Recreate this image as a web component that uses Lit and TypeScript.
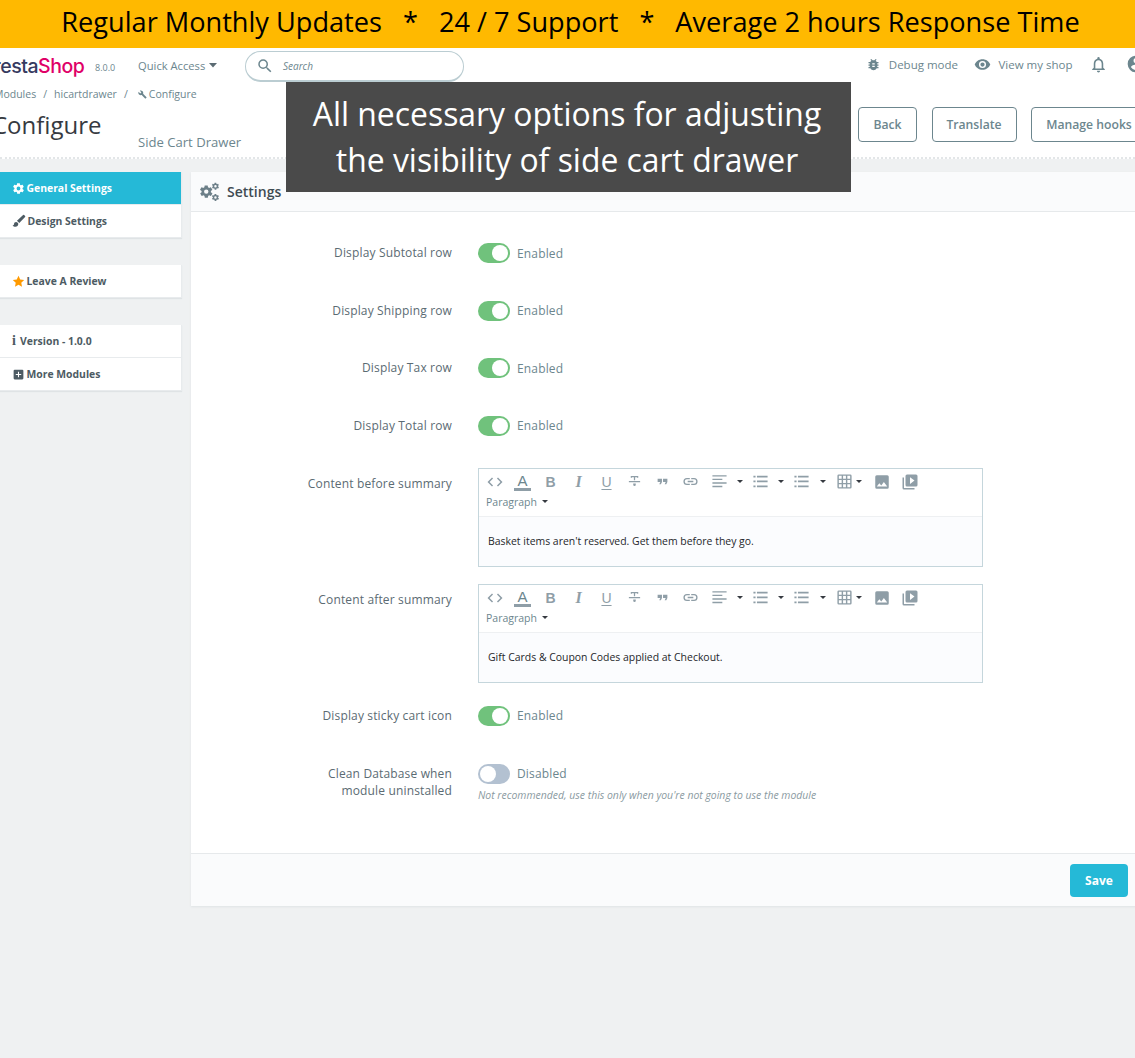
import { LitElement, html, css } from 'lit';
import { customElement } from 'lit/decorators.js';

const icon = (d: string, size = 14, color = 'currentColor', box = 24) => html`<svg
  width=${size}
  height=${size}
  viewBox="0 0 ${box} ${box}"
  fill=${color}
><path d=${d}></path></svg>`;

// material style icon paths
const GEAR =
  'M19.4 13c0-.3.1-.6.1-1s0-.7-.1-1l2.1-1.6c.2-.2.2-.4.1-.6l-2-3.5c-.1-.2-.4-.3-.6-.2l-2.5 1c-.5-.4-1.1-.7-1.7-1l-.4-2.6c0-.3-.2-.4-.5-.4h-4c-.3 0-.5.1-.5.4l-.4 2.6c-.6.3-1.2.6-1.7 1l-2.5-1c-.2-.1-.5 0-.6.2l-2 3.5c-.1.2-.1.4.1.6L4.6 11c0 .3-.1.7-.1 1s0 .7.1 1l-2.1 1.6c-.2.2-.2.4-.1.6l2 3.5c.1.2.4.3.6.2l2.5-1c.5.4 1.1.7 1.7 1l.4 2.6c0 .3.2.4.5.4h4c.3 0 .5-.1.5-.4l.4-2.6c.6-.3 1.2-.6 1.7-1l2.5 1c.2.1.5 0 .6-.2l2-3.5c.1-.2.1-.4-.1-.6L19.4 13zM12 15.5a3.5 3.5 0 1 1 0-7 3.5 3.5 0 0 1 0 7z';
const BRUSH =
  'M7 13.500c-2 0-3.500 1.500-3.500 3.500 0 1.400-1 2.200-2.500 2.500C2 21 4 22 6 22c2.600 0 4.800-2 4.800-4.700 0-2.100-1.700-3.800-3.800-3.800zM22.400 3.300l-1.700-1.700a1.200 1.200 0 0 0-1.700 0L8.500 11.500l4 4 9.900-10.500a1.200 1.200 0 0 0 0-1.700z';
const STAR = 'M12 1.5l3.2 6.9 7.3.9-5.4 5.1 1.4 7.4L12 18.2l-6.5 3.6 1.4-7.4L1.5 9.3l7.3-.9z';
const PLUS_BOX =
  'M19 3H5a2 2 0 0 0-2 2v14a2 2 0 0 0 2 2h14a2 2 0 0 0 2-2V5a2 2 0 0 0-2-2zm-2 10h-4v4h-2v-4H7v-2h4V7h2v4h4v2z';
const BUG =
  'M20 8h-2.8c-.5-.8-1.1-1.5-1.8-2L17 4.4 15.6 3l-2.2 2.2a6 6 0 0 0-2.8 0L8.4 3 7 4.4 8.6 6c-.7.5-1.3 1.2-1.8 2H4v2h2.1c-.1.3-.1.7-.1 1v1H4v2h2v1c0 .3 0 .7.1 1H4v2h2.8a6 6 0 0 0 10.4 0H20v-2h-2.1c.1-.3.1-.7.1-1v-1h2v-2h-2v-1c0-.3 0-.7-.1-1H20V8zm-6 8h-4v-2h4v2zm0-4h-4v-2h4v2z';
const EYE =
  'M12 4.5C7 4.5 2.7 7.6 1 12c1.7 4.4 6 7.5 11 7.5s9.3-3.1 11-7.5c-1.7-4.4-6-7.5-11-7.5zM12 17a5 5 0 1 1 0-10 5 5 0 0 1 0 10zm0-8a3 3 0 1 0 0 6 3 3 0 0 0 0-6z';
const BELL =
  'M12 22a2 2 0 0 0 2-2h-4a2 2 0 0 0 2 2zm6-6v-5c0-3.1-1.6-5.6-4.5-6.3V4a1.5 1.5 0 0 0-3 0v.7C7.6 5.4 6 7.9 6 11v5l-2 2v1h16v-1l-2-2zm-2 1H8v-6c0-2.5 1.5-4.5 4-4.5s4 2 4 4.5v6z';
const USER =
  'M12 2a10 10 0 1 0 0 20 10 10 0 0 0 0-20zm0 3a3 3 0 1 1 0 6 3 3 0 0 1 0-6zm0 14.2a7.2 7.2 0 0 1-6-3.2c0-2 4-3.1 6-3.1s6 1.1 6 3.1a7.2 7.2 0 0 1-6 3.2z';
const SEARCH =
  'M15.5 14h-.79l-.28-.27A6.471 6.471 0 0 0 16 9.5 6.5 6.5 0 1 0 9.5 16c1.61 0 3.09-.59 4.23-1.57l.27.28v.79l5 4.99L20.49 19l-4.99-5zm-6 0C7.01 14 5 11.99 5 9.5S7.01 5 9.5 5 14 7.01 14 9.5 11.99 14 9.5 14z';
const WRENCH =
  'M22.700 19l-9.100-9.100c.9-2.300.4-5-1.500-6.900C10.100 1 7.100.6 4.700 1.700L9 6 6 9 1.600 4.700C.4 7.100.9 10.100 2.900 12.100c1.900 1.900 4.600 2.400 6.900 1.500l9.100 9.100c.4.4 1 .4 1.400 0l2.300-2.300c.5-.4.5-1.100.1-1.400z';
const CODE = 'M9.400 16.600 4.800 12l4.600-4.600L8 6l-6 6 6 6 1.400-1.400zm5.200 0 4.600-4.600-4.600-4.600L16 6l6 6-6 6-1.400-1.400z';
const STRIKE = 'M3 11h18v2H3zM6 3h12v3h-2V5H13v5h-2V5H8v1H6zM10 17a2 2 0 1 0 4 0v-2h-4z';
const QUOTE = 'M3 7h8v6l-2 4H6l2-4H3zm10 0h8v6l-2 4h-3l2-4h-5z';
const LINK =
  'M3.900 12A3.100 3.100 0 0 1 7 8.900h4V7H7a5 5 0 0 0 0 10h4v-1.900H7A3.100 3.100 0 0 1 3.900 12zM8 13h8v-2H8v2zm9-6h-4v1.900h4a3.100 3.100 0 0 1 0 6.200h-4V17h4a5 5 0 0 0 0-10z';
const ALIGN = 'M2 3h20v2H2zM2 8h14v2H2zM2 13h20v2H2zM2 18h14v2H2z';
const BULLETS = 'M7 4h15v2.500H7zM7 10.700h15v2.500H7zM7 17.500h15V20H7zM2 4h3v2.500H2zM2 10.700h3v2.500H2zM2 17.500h3V20H2z';
const TABLE =
  'M20 2H4a2 2 0 0 0-2 2v16a2 2 0 0 0 2 2h16a2 2 0 0 0 2-2V4a2 2 0 0 0-2-2zM8 20H4v-4h4v4zm0-6H4v-4h4v4zm0-6H4V4h4v4zm6 12h-4v-4h4v4zm0-6h-4v-4h4v4zm0-6h-4V4h4v4zm6 12h-4v-4h4v4zm0-6h-4v-4h4v4zm0-6h-4V4h4v4z';
const IMAGE = 'M21 19V5a2 2 0 0 0-2-2H5a2 2 0 0 0-2 2v14a2 2 0 0 0 2 2h14a2 2 0 0 0 2-2zM8.500 13.500l2.500 3 3.500-4.500 4.500 6H5l3.500-4.500z';
const VIDEO =
  'M4 6H2v14a2 2 0 0 0 2 2h14v-2H4V6zm16-4H8a2 2 0 0 0-2 2v12a2 2 0 0 0 2 2h12a2 2 0 0 0 2-2V4a2 2 0 0 0-2-2zm-8 12.500v-9l6 4.500-6 4.500z';

const caret = html`<i class="caret"></i>`;

const caretDark = html`<svg width="8" height="5" viewBox="0 0 8 5"><path d="M0 0h8L4 4.500z" fill="#5b6b73"></path></svg>`;

const cogs = html`<svg width="20" height="20" viewBox="0 0 24 24" fill="#6c7f88">
  <g transform="translate(-1.500 2.500) scale(.75)"><path d=${GEAR}></path></g>
  <g transform="translate(13.500 0) scale(.42)"><path d=${GEAR}></path></g>
  <g transform="translate(13.500 13.500) scale(.42)"><path d=${GEAR}></path></g>
</svg>`;

@customElement('rich-editor')
export class RichEditor extends LitElement {
  static properties = { content: {} };
  declare content: string;

  static styles = css`
    :host {
      display: block;
      width: 505px;
      height: 99px;
      box-sizing: border-box;
      border: 1px solid #c5d6dc;
      background: #fbfcfe;
      font-family: 'Open Sans', sans-serif;
    }
    .toolbar {
      height: 48px;
      box-sizing: border-box;
      background: #fff;
      border-bottom: 1px solid #eef0f2;
      padding: 3px 0 0 1.500px;
      color: #8f9ea7;
    }
    .tools {
      display: flex;
      align-items: center;
      height: 20px;
    }
    .tool {
      width: 28px;
      height: 20px;
      flex: none;
      display: flex;
      align-items: center;
      justify-content: center;
      font: 700 14px 'Liberation Sans', sans-serif;
    }
    .tool.i {
      font: italic 700 16px 'Liberation Serif', serif;
    }
    .tool.u {
      font-weight: 400;
      text-decoration: underline;
      text-underline-offset: 2px;
    }
    .tool.a span {
      font-weight: 400;
      font-size: 15px;
      line-height: 15px;
      padding: 0 3px;
      color: #6c868e;
      border-bottom: 3px solid #8f9ea7;
    }
    .drop {
      display: flex;
      align-items: center;
      flex: none;
      gap: 9.400px;
      margin-right: 9px;
    }
    .drop.first {
      margin-left: 6px;
    }
    .drop.last {
      margin-right: 10.400px;
    }
    .drop.table {
      gap: 3.400px;
      margin-right: 5.500px;
    }
    .caret {
      display: inline-block;
      width: 0;
      height: 0;
      border-left: 3px solid transparent;
      border-right: 3px solid transparent;
      border-top: 3.500px solid #363a41;
    }
    .format {
      display: flex;
      align-items: center;
      gap: 5px;
      margin: 3px 0 0 5.500px;
      font-size: 10.500px;
      color: #6c868e;
    }
    .body {
      padding: 17px 0 0 9px;
      font-size: 10.450px;
      line-height: 14px;
      color: #25272b;
    }
  `;

  render() {
    return html`
      <div class="toolbar">
        <div class="tools">
          <span class="tool">${icon(CODE, 18)}</span>
          <span class="tool a"><span>A</span></span>
          <span class="tool">B</span>
          <span class="tool i">I</span>
          <span class="tool u">U</span>
          <span class="tool">${icon(STRIKE, 15)}</span>
          <span class="tool">${icon(QUOTE, 13)}</span>
          <span class="tool">${icon(LINK, 17)}</span>
          <span class="drop first">${icon(ALIGN, 17)}${caret}</span>
          <span class="drop">${icon(BULLETS, 17)}${caret}</span>
          <span class="drop last">${icon(BULLETS, 17)}${caret}</span>
          <span class="drop table">${icon(TABLE, 17)}${caret}</span>
          <span class="tool">${icon(IMAGE, 18)}</span>
          <span class="tool">${icon(VIDEO, 18)}</span>
        </div>
        <div class="format">Paragraph ${caret}</div>
      </div>
      <div class="body">${this.content}</div>
    `;
  }
}

@customElement('app-root')
export class AppRoot extends LitElement {
  static styles = css`
    :host {
      display: block;
      position: relative;
      width: 1135px;
      height: 1058px;
      overflow: hidden;
      background: #eff1f2;
      font-family: 'Open Sans', sans-serif;
      color: #6c868e;
    }

    .banner {
      height: 48px;
      box-sizing: border-box;
      padding: 0 0 5px 6px;
      background: #ffb900;
      color: #000;
      display: flex;
      align-items: center;
      justify-content: center;
      gap: 21px;
      font-size: 27.150px;
      white-space: pre;
    }

    .header {
      height: 111px;
      box-sizing: border-box;
      background: #fff;
      border-bottom: 2px dotted #e3e6e8;
      display: flex;
      flex-direction: column;
    }

    .topbar {
      display: flex;
      align-items: center;
      height: 36px;
      font-size: 11.200px;
      white-space: nowrap;
    }
    .logo {
      margin-left: -18.400px;
      width: 113.400px;
      font: 500 19.500px 'Inter', sans-serif;
      letter-spacing: -0.5px;
      color: #363a5f;
      flex: none;
    }
    .logo b {
      font-weight: 500;
      color: #df0067;
    }
    .version {
      width: 43px;
      flex: none;
      font-size: 9px;
      margin-top: 3px;
    }
    .quick {
      width: 107px;
      flex: none;
      display: flex;
      align-items: center;
      gap: 4px;
      margin-bottom: 2px;
    }
    .search {
      width: 219px;
      height: 31px;
      flex: none;
      box-sizing: border-box;
      margin-top: 1px;
      border: 1px solid #bbcdd2;
      border-bottom-width: 2px;
      border-radius: 16px;
      display: flex;
      align-items: center;
      gap: 9px;
      padding-left: 10px;
      font-style: italic;
      font-size: 10px;
      color: #6c868e;
    }
    .actions {
      margin-left: auto;
      margin-right: -10.500px;
      margin-bottom: 4px;
      display: flex;
      align-items: center;
      font-size: 11.500px;
      color: #6c868e;
    }
    .action {
      display: flex;
      align-items: center;
      gap: 7.500px;
      margin-right: 16px;
    }
    .action.tight {
      margin-right: 18px;
    }

    .head {
      display: flex;
      flex: 1;
    }
    .titles {
      flex: 1;
      min-width: 0;
    }
    .crumbs {
      margin: 3px 0 0 -6px;
      display: flex;
      align-items: center;
      gap: 7px;
      font-size: 10.500px;
      height: 14px;
      white-space: nowrap;
    }
    .crumb-link {
      display: flex;
      align-items: center;
      gap: 2px;
      margin-left: 3px;
    }
    .title-row {
      display: flex;
      align-items: flex-end;
      margin-top: 8px;
    }
    .title-row h1 {
      margin: 0 0 0 -8px;
      width: 146px;
      font-size: 24px;
      font-weight: 400;
      line-height: 32px;
      color: #363a41;
      flex: none;
    }
    .title-row span {
      font-size: 13.100px;
      line-height: 16px;
      margin-bottom: -9px;
      color: #6c868e;
    }
    .buttons {
      display: flex;
      gap: 14.500px;
      margin: 23px -12px 0 0;
      flex: none;
    }
    .btn {
      height: 35px;
      box-sizing: border-box;
      display: flex;
      align-items: center;
      justify-content: center;
      border: 1px solid #6c868e;
      border-radius: 4px;
      font-size: 12.200px;
      font-weight: 600;
      background: #fff;
      color: #6c868e;
      white-space: nowrap;
    }

    .tip {
      position: absolute;
      left: 286px;
      top: 82px;
      width: 565px;
      height: 110px;
      background: #4a4a4a;
      color: #fff;
      font-size: 31.900px;
      line-height: 46px;
      text-align: center;
      padding: 9px 3px 0 0;
      box-sizing: border-box;
    }

    .main {
      display: grid;
      grid-template-columns: 182px 1fr;
      gap: 9px;
      margin-top: 13px;
      margin-right: -20px;
    }

    .side {
      display: flex;
      flex-direction: column;
      gap: 27px;
    }
    .group {
      background: #fff;
      box-shadow: 0 1px 1px #dfe3e5;
      border: 1px solid #e8ebed;
      border-width: 0 1px 1px 0;
    }
    .item {
      height: 32px;
      display: flex;
      align-items: center;
      gap: 1.500px;
      padding-left: 12px;
      font-size: 10.400px;
      font-weight: 700;
      color: #4d5b63;
      white-space: nowrap;
    }
    .item + .item {
      border-top: 1px solid #e8ebed;
    }
    .item.active {
      background: #25b9d7;
      color: #fff;
    }
    .info {
      width: 5px;
      margin-right: 1.500px;
      font: 700 14px 'Liberation Serif', serif;
    }

    .panel {
      background: #fff;
      height: 734px;
      box-shadow: 0 1px 2px #dfe3e5;
      display: flex;
      flex-direction: column;
    }
    .panel-head {
      height: 40px;
      box-sizing: border-box;
      background: #fafbfc;
      border-bottom: 1px solid #e6e9eb;
      display: flex;
      align-items: center;
      gap: 7px;
      padding-left: 9px;
      font-size: 14px;
      font-weight: 600;
      color: #3f4b52;
    }
    .form {
      flex: 1;
      padding-top: 31px;
    }
    .row {
      display: grid;
      grid-template-columns: 261px 1fr;
      column-gap: 26px;
      font-size: 12px;
    }
    .row + .row {
      margin-top: 37.670px;
    }
    .row.near {
      margin-top: 17px;
    }
    .row.before-editor {
      margin-top: 32px;
    }
    .row.after-editor {
      margin-top: 23px;
    }
    .row label {
      text-align: right;
      line-height: 17px;
      color: #5b6b73;
      letter-spacing: 0.15px;
      padding-top: 1px;
    }
    .row.plain label {
      line-height: 20px;
      padding-top: 0;
    }
    .row.editor label {
      padding-top: 7px;
    }
    .switch {
      display: flex;
      align-items: center;
      gap: 7px;
      height: 20px;
      letter-spacing: 0.15px;
    }
    .track {
      position: relative;
      display: block;
      width: 32px;
      height: 20px;
      border-radius: 10px;
      background: #70c27c;
    }
    .track::after {
      content: '';
      position: absolute;
      top: 2px;
      right: 2px;
      width: 16px;
      height: 16px;
      border-radius: 50%;
      background: #fff;
    }
    .track.off {
      background: #b3c1d1;
    }
    .track.off::after {
      right: auto;
      left: 2px;
    }
    .help {
      margin-top: 4px;
      font-size: 10.450px;
      font-style: italic;
      color: #8a9aa1;
    }
    .panel-foot {
      height: 52px;
      background: #fafbfc;
      border-top: 1px solid #e6e9eb;
      display: flex;
      align-items: center;
      padding-left: 879px;
    }
    .save {
      width: 58px;
      height: 33px;
      border-radius: 4px;
      background: #25b9d7;
      color: #fff;
      font-size: 12px;
      font-weight: 700;
      display: flex;
      align-items: center;
      justify-content: center;
    }
  `;

  private renderSwitch(label: string) {
    return html`<div class="row plain">
      <label>${label}</label>
      <div class="switch"><span class="track"></span>Enabled</div>
    </div>`;
  }

  render() {
    return html`
      <div class="banner">
        <span>Regular Monthly Updates</span><span>*</span><span>24 / 7 Support</span><span>*</span
        ><span>Average 2 hours Response Time</span>
      </div>

      <div class="header">
        <div class="topbar">
          <div class="logo">Presta<b>Shop</b></div>
          <div class="version">8.0.0</div>
          <div class="quick">Quick Access ${caretDark}</div>
          <div class="search">${icon(SEARCH, 18)}Search</div>
          <div class="actions">
            <span class="action">${icon(BUG, 15)}Debug mode</span>
            <span class="action">${icon(EYE, 17)}View my shop</span>
            <span class="action tight">${icon(BELL, 19)}</span>
            ${icon(USER, 20)}
          </div>
        </div>
        <div class="head">
          <div class="titles">
            <div class="crumbs">
              <span>Modules</span><span>/</span><span>hicartdrawer</span><span>/</span>
              <span class="crumb-link">${icon(WRENCH, 9)}Configure</span>
            </div>
            <div class="title-row">
              <h1>Configure</h1>
              <span>Side Cart Drawer</span>
            </div>
          </div>
          <div class="buttons">
            <div class="btn" style="width:59px">Back</div>
            <div class="btn" style="width:85px">Translate</div>
            <div class="btn" style="width:116px">Manage hooks</div>
          </div>
        </div>
      </div>

      <div class="main">
        <div class="side">
          <div class="group">
            <div class="item active">${icon(GEAR, 13)}General Settings</div>
            <div class="item">${icon(BRUSH, 14)}Design Settings</div>
          </div>
          <div class="group">
            <div class="item">${icon(STAR, 13, '#ff9a00')}Leave A Review</div>
          </div>
          <div class="group">
            <div class="item"><b class="info">i</b>Version - 1.0.0</div>
            <div class="item">${icon(PLUS_BOX, 13)}More Modules</div>
          </div>
        </div>

        <div class="panel">
          <div class="panel-head">${cogs}Settings</div>
          <div class="form">
            ${this.renderSwitch('Display Subtotal row')} ${this.renderSwitch('Display Shipping row')}
            ${this.renderSwitch('Display Tax row')} ${this.renderSwitch('Display Total row')}
            <div class="row editor before-editor">
              <label>Content before summary</label>
              <rich-editor content="Basket items aren't reserved. Get them before they go."></rich-editor>
            </div>
            <div class="row editor near">
              <label>Content after summary</label>
              <rich-editor content="Gift Cards & Coupon Codes applied at Checkout."></rich-editor>
            </div>
            <div class="row plain after-editor">
              <label>Display sticky cart icon</label>
              <div class="switch"><span class="track"></span>Enabled</div>
            </div>
            <div class="row">
              <label>Clean Database when<br />module uninstalled</label>
              <div>
                <div class="switch"><span class="track off"></span>Disabled</div>
                <div class="help">Not recommended, use this only when you're not going to use the module</div>
              </div>
            </div>
          </div>
          <div class="panel-foot"><div class="save">Save</div></div>
        </div>
      </div>

      <div class="tip">All necessary options for adjusting<br />the visibility of side cart drawer</div>
    `;
  }
}
